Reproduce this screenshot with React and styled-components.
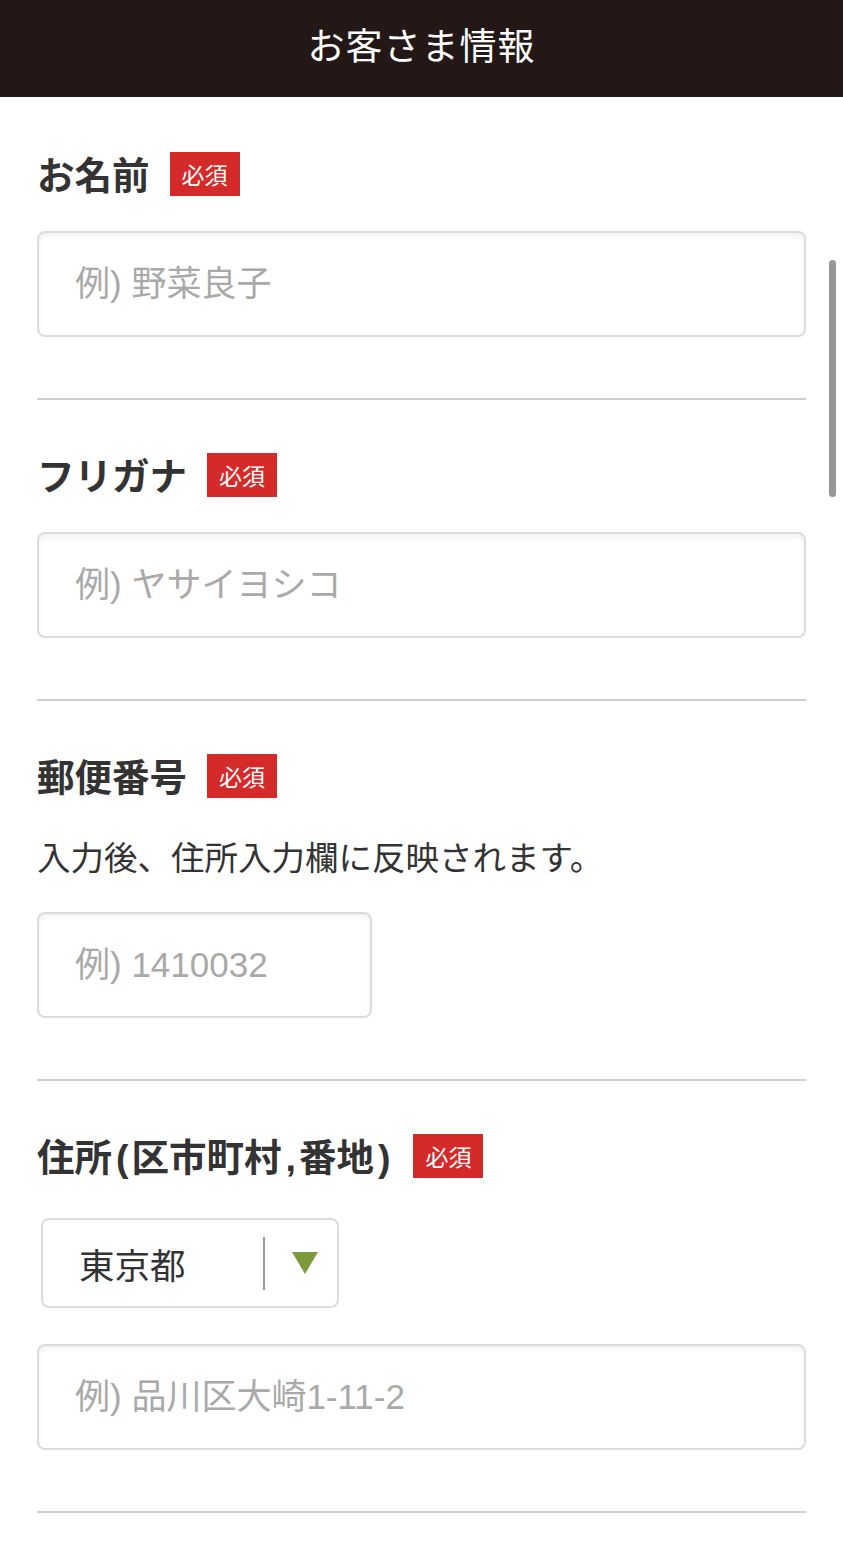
import React from "react";
import styled, { createGlobalStyle } from "styled-components";

const GlobalStyle = createGlobalStyle`
  *, *::before, *::after {
    box-sizing: border-box;
  }
  html, body {
    margin: 0;
    padding: 0;
    background: #fff;
    overflow: hidden;
  }
  body {
    font-family: "Liberation Sans", "Noto Sans CJK JP", sans-serif;
    color: #333;
  }
`;

const fields = [
  { label: "お名前", placeholder: "例) 野菜良子" },
  { label: "フリガナ", placeholder: "例) ヤサイヨシコ" },
  {
    label: "郵便番号",
    note: "入力後、住所入力欄に反映されます。",
    placeholder: "例) 1410032",
    narrow: true,
  },
];

export default function App() {
  return (
    <Page>
      <GlobalStyle />
      <Header>お客さま情報</Header>
      <Form>
        {fields.map((f) => (
          <Field key={f.label}>
            <LabelRow>
              <Label>{f.label}</Label>
              <Badge>必須</Badge>
            </LabelRow>
            {f.note && <Note>{f.note}</Note>}
            <TextInput
              $narrow={f.narrow}
              $gap={f.note ? 34 : 35}
              placeholder={f.placeholder}
            />
          </Field>
        ))}
        <Field>
          <LabelRow>
            <Label>
              住所<Punct>(</Punct>区市町村<Punct>,</Punct>番地<Punct>)</Punct>
            </Label>
            <Badge>必須</Badge>
          </LabelRow>
          <Select>
            <span>東京都</span>
            <SelectSep />
            <Arrow viewBox="0 0 26 22">
              <path d="M0 0 H26 L13 22 Z" fill="#7a9a3c" />
            </Arrow>
          </Select>
          <TextInput $gap={36} placeholder="例) 品川区大崎1-11-2" />
        </Field>
      </Form>
      <ScrollThumb />
    </Page>
  );
}

const Page = styled.div`
  position: relative;
  width: 843px;
  min-height: 1550px;
  background: #fff;
`;

const Header = styled.h1`
  margin: 0;
  height: 97px;
  background: #231815;
  color: #fff;
  display: flex;
  align-items: center;
  justify-content: center;
  font-family: "Noto Sans CJK JP", sans-serif;
  font-weight: 400;
  font-size: 37px;
  letter-spacing: 1px;
  padding-bottom: 10px;
`;

const Form = styled.div`
  padding: 2px 37px 0;
`;

const Field = styled.section`
  padding: 53px 0 61px;
  border-bottom: 2px solid #cfcfcf;
  display: flex;
  flex-direction: column;
  align-items: flex-start;
`;

const LabelRow = styled.div`
  display: flex;
  align-items: center;
  gap: 20px;
  height: 44px;
`;

const Label = styled.span`
  font-family: "Liberation Sans", "Noto Sans CJK JP", sans-serif;
  font-weight: 700;
  font-size: 37.5px;
  line-height: 44px;
  padding-top: 3px;
  color: #333;
`;

const Punct = styled.span`
  margin: 0 3px 0 4px;
`;

const Badge = styled.span`
  display: flex;
  align-items: center;
  justify-content: center;
  height: 44px;
  padding: 0 12px;
  background: #d42a2a;
  color: #fff;
  font-family: "Noto Sans CJK JP", sans-serif;
  font-size: 23px;
  line-height: 1;
`;

const Note = styled.p`
  margin: 36px 0 0;
  font-family: "Noto Sans CJK JP", sans-serif;
  font-size: 33.5px;
  line-height: 44px;
  color: #333;
`;

const TextInput = styled.input`
  display: block;
  margin-top: ${(p) => p.$gap}px;
  width: ${(p) => (p.$narrow ? "335px" : "100%")};
  height: 106px;
  padding: 0 36px;
  border: 2px solid #dcdcdc;
  border-radius: 8px;
  box-shadow: inset 0 3px 5px rgba(0, 0, 0, 0.06);
  background: #fff;
  font-family: "Liberation Sans", "Noto Sans CJK JP", sans-serif;
  font-size: 35px;
  color: #333;
  outline: none;
  &::placeholder {
    color: #a9a9a9;
  }
`;

const Select = styled.div`
  margin: 40px 0 0 4px;
  width: 298px;
  height: 90px;
  border: 2px solid #dcdcdc;
  border-radius: 8px;
  display: flex;
  align-items: center;
  padding: 0 19px 0 36px;
  font-family: "Noto Sans CJK JP", sans-serif;
  font-size: 35.5px;
  color: #333;
  span {
    flex: 1;
  }
`;

const SelectSep = styled.i`
  width: 2px;
  height: 53px;
  background: #999;
  margin-right: 27px;
`;

const Arrow = styled.svg`
  width: 26px;
  height: 22px;
`;

const ScrollThumb = styled.div`
  position: absolute;
  top: 260px;
  right: 7px;
  width: 7px;
  height: 237px;
  border-radius: 4px;
  background: #979797;
`;
